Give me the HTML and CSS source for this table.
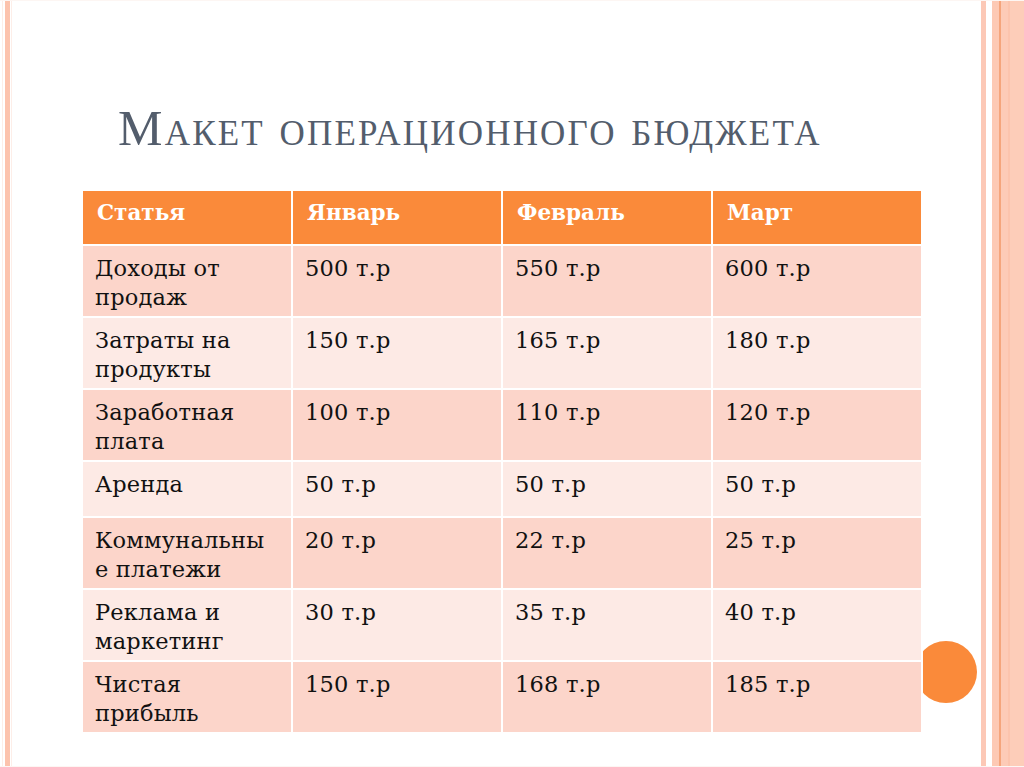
FILE: index.html
```html
<!DOCTYPE html>
<html lang="ru">
<head>
<meta charset="utf-8">
<title>Макет операционного бюджета</title>
<link rel="stylesheet" href="styles.css">
</head>
<body>
<div class="slide">
  <div class="content">
    <h1 class="title">Макет операционного бюджета</h1>
    <div class="table-wrap">
      <span class="dot"></span>
      <table class="budget">
        <thead>
          <tr><th>Статья</th><th>Январь</th><th>Февраль</th><th>Март</th></tr>
        </thead>
        <tbody>
          <tr class="dark two"><td>Доходы от<br>продаж</td><td>500 т.р</td><td>550 т.р</td><td>600 т.р</td></tr>
          <tr class="light two"><td>Затраты на<br>продукты</td><td>150 т.р</td><td>165 т.р</td><td>180 т.р</td></tr>
          <tr class="dark two"><td>Заработная<br>плата</td><td>100 т.р</td><td>110 т.р</td><td>120 т.р</td></tr>
          <tr class="light one"><td>Аренда</td><td>50 т.р</td><td>50 т.р</td><td>50 т.р</td></tr>
          <tr class="dark two"><td>Коммунальны<br>е платежи</td><td>20 т.р</td><td>22 т.р</td><td>25 т.р</td></tr>
          <tr class="light two"><td>Реклама и<br>маркетинг</td><td>30 т.р</td><td>35 т.р</td><td>40 т.р</td></tr>
          <tr class="dark two"><td>Чистая<br>прибыль</td><td>150 т.р</td><td>168 т.р</td><td>185 т.р</td></tr>
        </tbody>
      </table>
    </div>
  </div>
</div>
</body>
</html>
```

FILE: styles.css
```css
html, body {
  margin: 0;
  padding: 0;
  background: #ffffff;
}

.slide {
  width: 1024px;
  height: 767px;
  box-sizing: border-box;
  background:
    linear-gradient(to right,
      #ffffff 0, #ffffff 2px,
      #fdeee8 2px, #fdeee8 3px,
      #ffffff 3px, #ffffff 5px,
      #fcc3ad 5px, #fcc3ad 10px,
      #ffffff 10px, #ffffff 11px,
      #fdeee8 11px, #fdeee8 12px,
      transparent 12px) left top / 20px 100% no-repeat,
    linear-gradient(to right,
      transparent 0, transparent 981px,
      #fcc8b6 981px, #fcc8b6 986px,
      #ffffff 986px, #ffffff 992px,
      #fdc9b4 992px, #fdc9b4 999px,
      #f5a57c 999px, #f5a57c 1001px,
      #fdcbb7 1001px, #fdcbb7 1008px,
      #fcc4ad 1008px, #fcc4ad 1010px,
      #fdcdb9 1010px, #fdcdb9 1024px) left top / 1024px 100% no-repeat,
    #ffffff;
  border-top: 1px solid #fdf6f3;
  border-bottom: 1px solid #fdf6f3;
}

.content {
  padding: 96px 0 0 81px;
}

.title {
  margin: 0 0 0 37px;
  font-family: "Liberation Serif", serif;
  font-variant: small-caps;
  font-weight: normal;
  font-size: 50px;
  line-height: 62px;
  color: #535d6c;
  letter-spacing: 2.2px;
}

.table-wrap {
  position: relative;
  margin-top: 30px;
  width: 842px;
}

.dot {
  position: absolute;
  left: 834px;
  top: 452px;
  width: 62px;
  height: 62px;
  border-radius: 50%;
  background: #fa8a3a;
}

.budget {
  position: relative;
  border-collapse: separate;
  border-spacing: 2px;
  width: 842px;
  table-layout: fixed;
  background: #ffffff;
  font-family: "DejaVu Serif", serif;
}

.budget th {
  background: #fa8a3a;
  color: #ffffff;
  font-weight: bold;
  font-size: 21.5px;
  text-align: left;
  vertical-align: top;
  height: 53px;
  box-sizing: border-box;
  padding: 8px 14px 0;
  line-height: 28px;
}

.budget td {
  font-size: 22.5px;
  line-height: 28.5px;
  letter-spacing: 0.2px;
  color: #111111;
  vertical-align: top;
  box-sizing: border-box;
  padding: 8px 12px 4px;
}

.budget tr.one td { height: 54px; }
.budget tr.two td { height: 70px; }

.budget tr.dark td { background: #fcd5ca; }
.budget tr.light td { background: #fdeae5; }
```
